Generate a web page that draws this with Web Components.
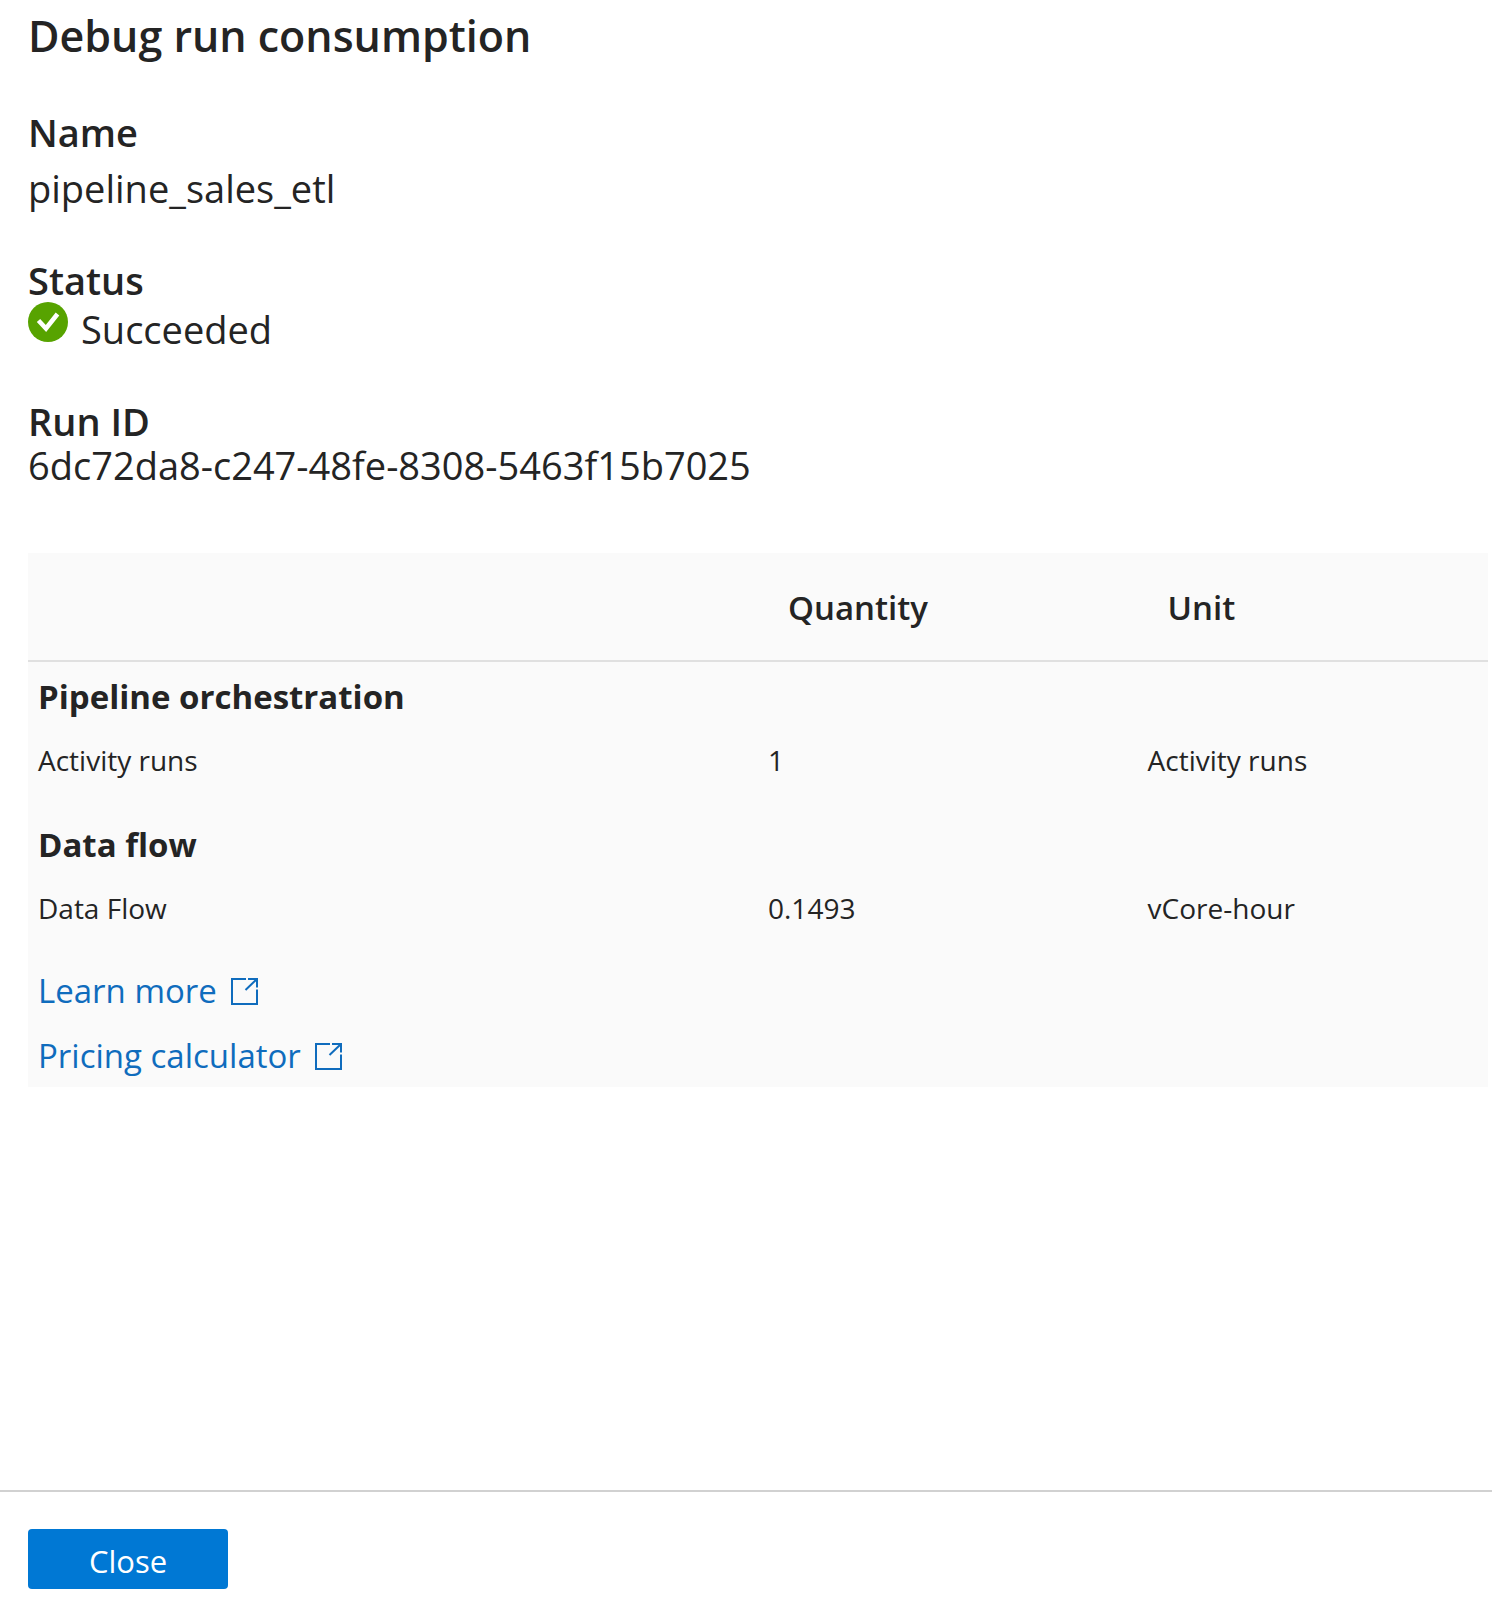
<!DOCTYPE html>
<html lang="en">
<head>
<meta charset="utf-8">
<title>Debug run consumption</title>
<style>
  body { margin: 0; background: #fff; color: #242424; font-family: "Segoe UI", "Open Sans", "Noto Sans", sans-serif; }
</style>
</head>
<body>
<consumption-panel heading="Debug run consumption">
  <detail-field label="Name" class="roomy">pipeline_sales_etl</detail-field>
  <detail-field label="Status"><run-status>Succeeded</run-status></detail-field>
  <detail-field label="Run ID">6dc72da8-c247-48fe-8308-5463f15b7025</detail-field>
  <consumption-table slot="table"></consumption-table>
  <panel-button slot="actions">Close</panel-button>
</consumption-panel>

<script>
const define = (name, html) => customElements.define(name, class extends HTMLElement {
  constructor() {
    super();
    const t = document.createElement('template');
    t.innerHTML = html;
    this.attachShadow({ mode: 'open' }).append(t.content.cloneNode(true));
  }
  connectedCallback() {
    for (const key of ['heading', 'label', 'href']) {
      const target = this.shadowRoot.querySelector(`[data-${key}]`);
      if (!target || !this.hasAttribute(key)) continue;
      if (key === 'href') target.href = this.getAttribute(key);
      else target.textContent = this.getAttribute(key);
    }
  }
});

define('consumption-panel', `
<style>
  :host { display: flex; flex-direction: column; min-height: 100vh; box-sizing: border-box; }
  header { padding: 6px 28px 0; }
  h1 { margin: 0; font-size: 43px; line-height: 60px; font-weight: 600; }
  main { flex: 1; }
  .fields { display: flex; flex-direction: column; gap: 48px; padding: 44px 28px 66px; }
  .table { padding: 0 4px 28px 28px; }
  footer { border-top: 2px solid #d1d1d1; padding: 37px 28px 21px; display: flex; }
</style>
<header><h1 data-heading></h1></header>
<main>
  <div class="fields"><slot></slot></div>
  <div class="table"><slot name="table"></slot></div>
</main>
<footer><slot name="actions"></slot></footer>`);

define('detail-field', `
<style>
  :host { display: flex; flex-direction: column; font-size: 38px; line-height: 44px; }
  :host(.roomy) { gap: 12px; }
  .label { font-weight: 600; }
</style>
<div class="label" data-label></div>
<div><slot></slot></div>`);

define('run-status', `
<style>
  :host { display: flex; gap: 13px; min-height: 49px; }
  svg { flex: none; width: 40px; height: 40px; }
  span { align-self: flex-end; }
</style>
<svg viewBox="0 0 40 40" aria-hidden="true"><circle cx="20" cy="20" r="20" fill="#57a300"/><path d="M10.500 18.500 18 26.500 29.500 12" fill="none" stroke="#fff" stroke-width="4.600"/></svg>
<span><slot></slot></span>`);

define('external-link', `
<style>
  :host { display: block; font-size: 33px; line-height: 44px; }
  a { display: inline-flex; align-items: center; gap: 13px; color: #0f6cbd; text-decoration: none; }
  svg { width: 28px; height: 28px; }
</style>
<a data-href href="#"><slot></slot><svg viewBox="0 0 28 28" fill="none" stroke="currentColor" stroke-width="2" aria-hidden="true"><path d="M16 2H2V27H27V12.500M18 2H27V10.500M27 2 15.500 13"/></svg></a>`);

define('consumption-table', `
<style>
  :host { display: block; }
  table { width: 100%; table-layout: fixed; border-collapse: separate; border-spacing: 0; background: #fafafa; }
  .item { width: 50%; } .quantity { width: 26%; }
  th, td { text-align: left; vertical-align: top; font-weight: 400; padding: 11px 10px 30px; font-size: 28px; line-height: 40px; }
  thead th, thead td { padding: 33px 30px 30px; font-size: 33px; line-height: 44px; font-weight: 600; border-bottom: 2px solid #e0e0e0; }
  .group th { padding: 13px 10px 10px; font-size: 33px; line-height: 44px; font-weight: 700; }
  .link td { padding: 11px 10px 10px; }
  .link:last-child td { padding-bottom: 9px; }
</style>
<table>
  <colgroup><col class="item"><col class="quantity"><col></colgroup>
  <thead><tr><td></td><th scope="col">Quantity</th><th scope="col">Unit</th></tr></thead>
  <tbody>
    <tr class="group"><th colspan="3" scope="rowgroup">Pipeline orchestration</th></tr>
    <tr><th scope="row">Activity runs</th><td>1</td><td>Activity runs</td></tr>
  </tbody>
  <tbody>
    <tr class="group"><th colspan="3" scope="rowgroup">Data flow</th></tr>
    <tr><th scope="row">Data Flow</th><td>0.1493</td><td>vCore-hour</td></tr>
  </tbody>
  <tfoot>
    <tr class="link"><td colspan="3"><external-link href="#learn-more">Learn more</external-link></td></tr>
    <tr class="link"><td colspan="3"><external-link href="#pricing-calculator">Pricing calculator</external-link></td></tr>
  </tfoot>
</table>`);

define('panel-button', `
<style>
  :host { display: block; }
  button { min-width: 200px; height: 60px; padding: 4px 24px 0; border: 0; border-radius: 4px; background: #0078d4; color: #fff; font-family: inherit; font-size: 31px; line-height: 44px; cursor: pointer; }
</style>
<button type="button"><slot></slot></button>`);
</script>
</body>
</html>
